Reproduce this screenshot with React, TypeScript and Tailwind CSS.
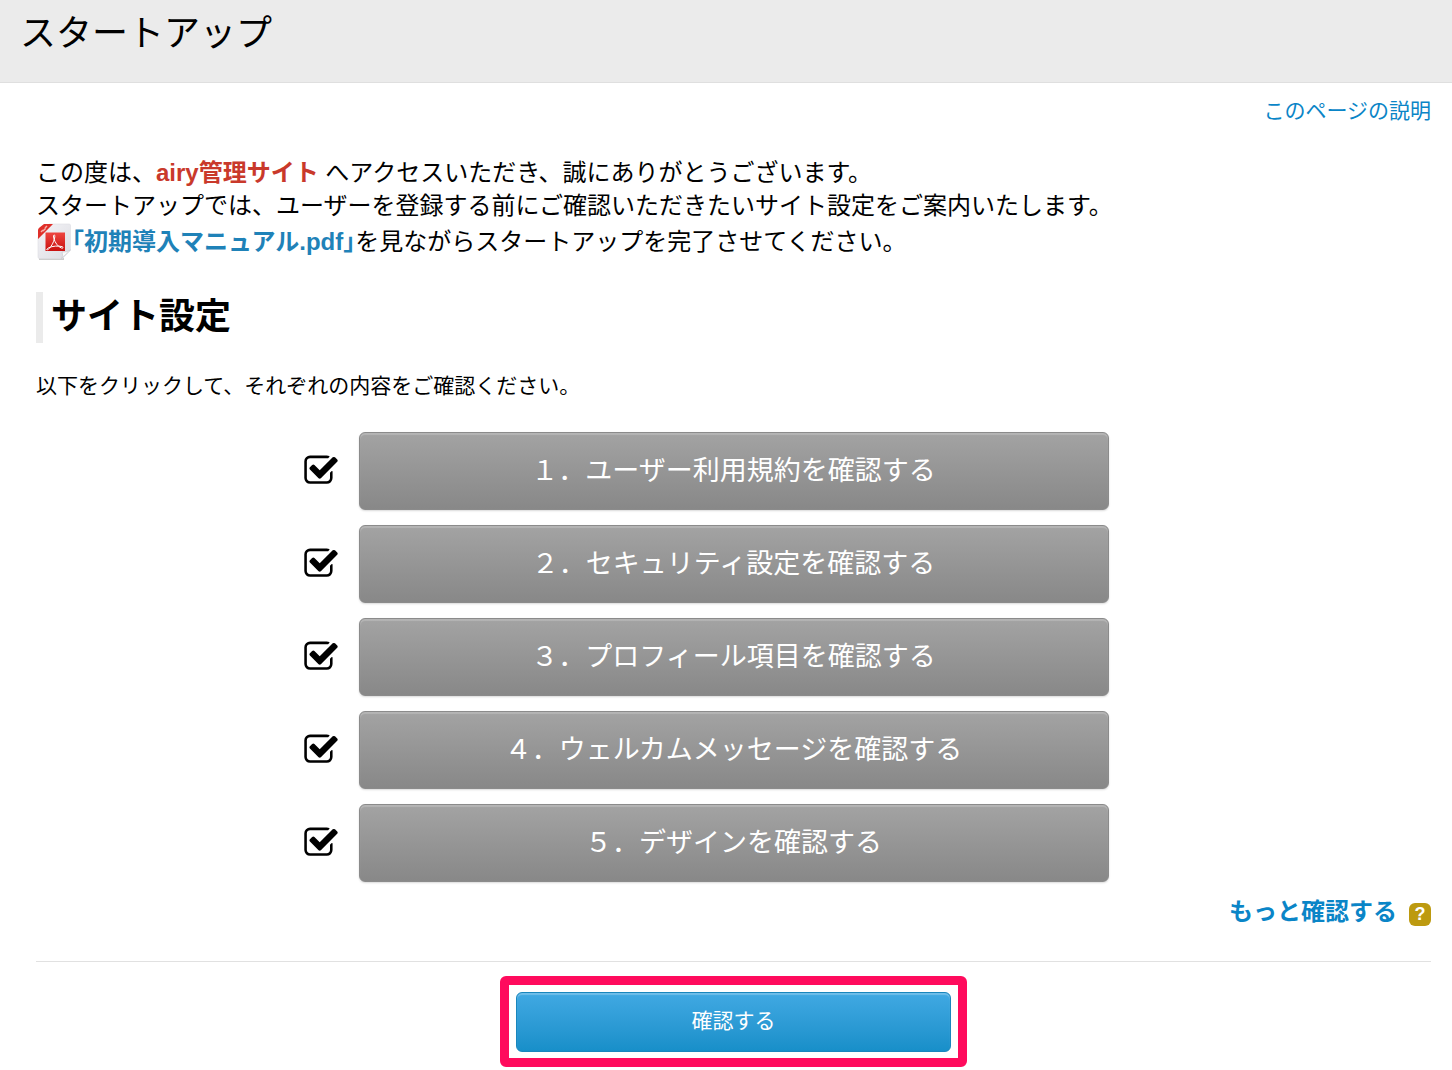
const STEPS = [
  "１．ユーザー利用規約を確認する",
  "２．セキュリティ設定を確認する",
  "３．プロフィール項目を確認する",
  "４．ウェルカムメッセージを確認する",
  "５．デザインを確認する",
];

function CheckIcon() {
  return (
    <svg viewBox="0 0 1792 1792" className="size-9 fill-black" aria-hidden="true">
      <path d="M1472 930v318q0 119-84.5 203.5t-203.5 84.5h-832q-119 0-203.5-84.5t-84.5-203.5v-832q0-119 84.5-203.5t203.5-84.5h832q63 0 117 25 15 7 18 23 3 17-9 29l-49 49q-10 10-23 10-3 0-9-2-23-6-45-6h-832q-66 0-113 47t-47 113v832q0 66 47 113t113 47h832q66 0 113-47t47-113v-254q0-13 9-22l64-64q10-10 23-10 6 0 12 3 20 8 20 29zm231-489l-814 814q-24 24-57 24t-57-24l-430-430q-24-24-24-57t24-57l110-110q24-24 57-24t57 24l263 263 647-647q24-24 57-24t57 24l110 110q24 24 24 57t-24 57z" />
    </svg>
  );
}

function PdfIcon() {
  return (
    <svg viewBox="0 0 36 38" className="h-[38px] w-9 shrink-0" aria-hidden="true">
      <defs>
        <linearGradient id="paper" x1="0" y1="0" x2="1" y2="1">
          <stop offset="0" stopColor="#f4f4f7" />
          <stop offset="1" stopColor="#dcdce2" />
        </linearGradient>
        <linearGradient id="plate" x1="0" y1="0" x2="0" y2="1">
          <stop offset="0" stopColor="#ee4540" />
          <stop offset="1" stopColor="#c9100f" />
        </linearGradient>
      </defs>
      <path d="M3 37h25" stroke="#bdbdbd" strokeWidth="1.5" />
      <path d="M13 2h20q1.500 0 1.500 1.500V28l-8 8.500H3.500Q2 36.500 2 35V15z" fill="url(#paper)" stroke="#dedee3" strokeWidth=".6" />
      <path d="M34.500 28q-4 2.500-8.500 2 1.500 4-.5 6.500z" fill="#fafafa" stroke="#c4c4ca" strokeWidth=".6" />
      <path d="M8 2h9L2 17V8q0-1.500 1.500-2.500z" fill="#df302a" />
      <path d="M5 10l2-2m0 1l2.500-2.500M9 6l2-2" stroke="#f7b0aa" strokeWidth="1.500" />
      <rect x="9.500" y="10.500" width="19.500" height="18.500" fill="url(#plate)" />
      <path
        d="M18.300 13c-1 0-1 1.700-.5 3.500 1.200 4 4 8 7.500 9.500 1.700.6 2.500-.6 1-1.300-3.500-1.200-10-.7-13.500 1-2.700 1.400-2.500 2.600-1.200 2 3-1.500 6.200-7.500 7-11.700.4-2 .3-3-.3-3z"
        fill="none"
        stroke="#fff"
        strokeWidth="1"
      />
    </svg>
  );
}

export default function App() {
  return (
    <div className="bg-white pb-1 font-['Liberation_Sans','Noto_Sans_CJK_JP',sans-serif] text-black">
      <header className="h-[83px] border-b border-[#dfdfdf] bg-[#ebebeb] px-5 pt-[7px]">
        <h1 className="text-4xl leading-[54px]">スタートアップ</h1>
      </header>

      <main className="pr-[21px] pl-9">
        <div className="flex justify-end pt-3">
          <a href="#help" className="text-[21px] leading-8 text-[#0a85c7]">
            このページの説明
          </a>
        </div>

        <div className="mt-[29px] text-2xl leading-[33px]">
          <p>
            この度は、<strong className="text-[#c9392b]">airy管理サイト</strong> へアクセスいただき、誠にありがとうございます。
          </p>
          <p>スタートアップでは、ユーザーを登録する前にご確認いただきたいサイト設定をご案内いたします。</p>
          <p className="flex items-center">
            <PdfIcon />
            <a href="#manual" className="font-bold text-[#1f82b8]">
              ｢初期導入マニュアル.pdf｣
            </a>
            を見ながらスタートアップを完了させてください。
          </p>
        </div>

        <h2 className="mt-8 border-l-[7px] border-[#ebebeb] pb-0.5 pl-2 text-4xl leading-[49px] font-bold">サイト設定</h2>
        <p className="mt-[27px] text-[21px] leading-8">以下をクリックして、それぞれの内容をご確認ください。</p>

        <ul className="mt-[30px] flex flex-col gap-[15px]">
          {STEPS.map((step) => (
            <li key={step} className="grid grid-cols-[1fr_minmax(0,750px)_1fr] items-center">
              <span className="flex justify-end pr-5">
                <CheckIcon />
              </span>
              <button
                type="button"
                className="h-[78px] rounded-md border border-[#8b8b8b] bg-linear-to-b from-[#a3a3a3] to-[#888] text-[27px] text-white shadow-[inset_0_2px_1px_rgba(255,255,255,0.2),0_1px_2px_rgba(0,0,0,0.15)]"
              >
                {step}
              </button>
            </li>
          ))}
        </ul>

        <div className="mt-3 flex items-center justify-end gap-3 border-b border-[#e1e1e1] pb-[31px]">
          <a href="#more" className="text-2xl leading-9 font-bold text-[#0a85c7]">
            もっと確認する
          </a>
          <button
            type="button"
            aria-label="?"
            className="mt-1 flex h-[23px] w-[22px] items-center justify-center rounded-md bg-[#bd9a10] text-lg font-bold text-white"
          >
            ?
          </button>
        </div>

        <div className="mt-3.5 flex justify-center">
          <div className="w-full max-w-[467px] rounded-md border-[9px] border-[#ff0b5d] px-[7px] pt-[7px] pb-1.5">
            <button
              type="button"
              className="block h-[60px] w-full rounded-md border border-[#1986bd] bg-linear-to-b from-[#40a9e3] to-[#178fc9] pb-0.5 text-[21px] text-white shadow-[inset_0_2px_1px_rgba(255,255,255,0.25)]"
            >
              確認する
            </button>
          </div>
        </div>
      </main>
    </div>
  );
}
